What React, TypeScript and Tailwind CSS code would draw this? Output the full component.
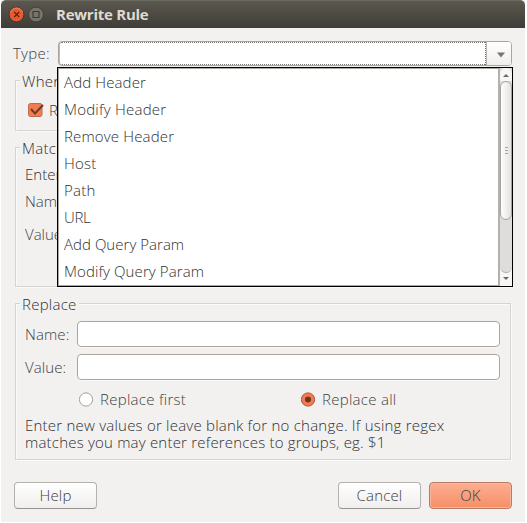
import React from 'react';

const OPTIONS: { label: string; tracking: string }[] = [
  { label: 'Add Header', tracking: 'tracking-[0.12px]' },
  { label: 'Modify Header', tracking: 'tracking-[0.23px]' },
  { label: 'Remove Header', tracking: 'tracking-[0.15px]' },
  { label: 'Host', tracking: 'tracking-[0.25px]' },
  { label: 'Path', tracking: 'tracking-[0.25px]' },
  { label: 'URL', tracking: 'tracking-[-0.3px]' },
  { label: 'Add Query Param', tracking: 'tracking-[0.03px]' },
  { label: 'Modify Query Param', tracking: 'tracking-[0.1px]' },
];

function TitleBar() {
  return (
    <header className="flex h-7 items-center rounded-t-[5px] border-t border-[#6b685f] bg-linear-to-b from-[#5b584f] to-[#3e3d38] pl-2">
      <svg width="36" height="17" viewBox="0 0 36 17" className="shrink-0">
        <circle cx="7.500" cy="8.500" r="7.400" fill="#e9592c" stroke="#3a2b24" strokeWidth=".8" />
        <path d="M1.400 6.500a6.400 6.400 0 0 1 12.200 0" fill="none" stroke="#f89471" strokeWidth=".8" />
        <path d="m5.200 6 5 5m0-5-5 5" stroke="#51251a" strokeWidth="1.200" />
        <circle cx="27" cy="8.500" r="7.400" fill="#77746a" stroke="#36352f" strokeWidth=".8" />
        <path d="M24 5.500h6v6h-6z" fill="none" stroke="#3b3a35" strokeWidth="1.100" />
      </svg>
      <h1 className="ml-[11px] text-[15px] leading-none font-bold tracking-[-0.25px] text-[#dfdbd2]">Rewrite Rule</h1>
    </header>
  );
}

function Group({ title, className, children }: { title: string; className: string; children?: React.ReactNode }) {
  return (
    <section
      className={`relative border border-[#d6d4d2] shadow-[inset_1px_1px_0_#fafafa,1px_1px_0_#fafafa] ${className}`}
    >
      <h2 className="absolute -top-[10px] left-[4px] bg-[#f2f1f0] px-[2px] leading-[20px] tracking-[0.25px] text-[#303030]">{title}</h2>
      {children}
    </section>
  );
}

function Field({ label }: { label: string }) {
  return (
    <label className="flex h-[26px] items-center">
      <span className="w-[52px] tracking-[0.1px]">{label}</span>
      <span className="h-[26px] w-[423px] rounded-[4px] border border-[#aaa59f] bg-white shadow-[0_1px_0_#fafafa]" />
    </label>
  );
}

function Radio({ label, checked }: { label: string; checked?: boolean }) {
  return (
    <label className="flex w-[222px] shrink-0 items-center gap-[6px]">
      <svg width="15" height="15" viewBox="0 0 15 15">
        <circle cx="7" cy="7.500" r="6.600" fill={checked ? '#f37b50' : '#fff'} stroke={checked ? '#aa5438' : '#a39f99'} />
        {checked && <circle cx="7" cy="7.500" r="3" fill="#6f3524" />}
      </svg>
      <span className="tracking-[0.28px]">{label}</span>
    </label>
  );
}

function ScrollBar() {
  return (
    <div className="flex w-[14px] shrink-0 flex-col border-l-2 border-[#b4b0ab] bg-[#dfdddb]">
      <div className="flex h-[13px] items-center justify-center rounded-t-[6px] bg-[#f7f6f5] pt-[2px]">
        <svg width="6" height="3" viewBox="0 0 6 3"><path d="M0 3 3 0 6 3z" fill="#6c6965" /></svg>
      </div>
      <div className="flex h-[139px] flex-col items-center justify-center gap-[2px] rounded-[6px] border border-[#a8a49f] bg-linear-to-r from-[#fefefe] to-[#e5e3e1]">
        <i className="h-px w-[3px] bg-[#a5a19c]" />
        <i className="h-px w-[3px] bg-[#a5a19c]" />
        <i className="h-px w-[3px] bg-[#a5a19c]" />
      </div>
      <div className="-mt-[6px] flex-1" />
      <div className="flex h-[19px] items-end overflow-hidden bg-[#f7f6f5]">
        <div className="flex h-full w-full flex-col items-center">
          <i className="h-[6px] w-full shrink-0 rounded-b-[6px] border-b border-[#b5b1ac] bg-[#dfdddb]" />
          <svg width="6" height="3" viewBox="0 0 6 3" className="mt-[4px]"><path d="M0 0 3 3 6 0z" fill="#6c6965" /></svg>
        </div>
      </div>
    </div>
  );
}

function Button({ label, primary }: { label: string; primary?: boolean }) {
  return (
    <button
      className={`flex h-[27px] w-[83px] items-center justify-center rounded-[4px] border tracking-[0.15px] ${
        primary
          ? 'border-[#b97b65] bg-linear-to-b from-[#fcae91] to-[#f68e66] shadow-[inset_0_0_0_1px_#fbb499]'
          : 'border-[#b5b1ac] border-b-[#96928d] bg-linear-to-b from-white to-[#f0efee]'
      }`}
    >
      {label}
    </button>
  );
}

export default function App() {
  return (
    <div className="h-[523px] w-[527px] overflow-hidden bg-white pl-px font-['Open_Sans','Noto_Sans',sans-serif] text-[15px] font-light text-[#3e3e3e]">
      <div className="flex h-[522px] w-[524px] flex-col bg-[#f2f1f0]">
        <TitleBar />
        <main className="flex flex-1 flex-col pl-[13px]">
          <div className="relative mt-[13px] flex h-[25px] items-center">
            <span className="-ml-px w-[45px] tracking-[0.25px]">Type:</span>
            <div className="flex h-[25px] w-[454px] rounded-[4px] border border-[#aaa59f] bg-white">
              <div className="flex-1 rounded-l-[3px] border border-dotted border-[#777]" />
              <div className="flex w-[25px] items-center justify-center rounded-r-[3px] border-l border-[#b5b1ac] bg-linear-to-b from-white to-[#efeeec]">
                <svg width="8" height="6" viewBox="0 0 8 6" className="mt-[2px] ml-[3px]"><path d="M0 .5h8L4 5.500z" fill="#77736e" /></svg>
              </div>
            </div>
            <div className="absolute top-[26px] left-[43px] z-10 flex h-[220px] w-[456px] border border-black bg-white">
              <ul className="flex-1 border-t border-b border-l border-[#aaa6a1] pl-[5px] text-[#303030]">
                {OPTIONS.map((o) => (
                  <li key={o.label} className={`h-[27px] leading-[27px] ${o.tracking}`}>{o.label}</li>
                ))}
              </ul>
              <ScrollBar />
            </div>
          </div>
          <Group title="When" className="mt-[14px] ml-px h-[51px] w-[496px]">
            <label className="mt-[19px] ml-[12px] flex h-[20px] items-center gap-[5px]">
              <svg width="16" height="16" viewBox="0 0 16 16">
                <rect x=".5" y="1.500" width="13.500" height="13" rx="2" fill="#f37b50" stroke="#bd694c" />
                <path d="m3 7 4 4.500 8-8.500" fill="none" stroke="#6b3b2b" strokeWidth="2" />
              </svg>
              <span className="w-[8px] overflow-hidden">R</span>
            </label>
          </Group>
          <Group title="Match" className="mt-[16px] ml-px h-[140px] w-[496px]">
            <div className="flex flex-col pt-[16px] pl-[9px] leading-[20px]">
              <span className="text-[#303030]">Enter</span>
              <span className="mt-[7px]">Name:</span>
              <span className="mt-[13px]">Value:</span>
            </div>
          </Group>
          <Group title="Replace" className="mt-[16px] ml-px h-[157px] w-[496px]">
            <div className="flex flex-col gap-[7px] pt-[17px] pl-[9px]">
              <Field label="Name:" />
              <Field label="Value:" />
            </div>
            <div className="mt-[9px] flex h-[20px] items-center pl-[63px]">
              <Radio label="Replace first" />
              <Radio label="Replace all" checked />
            </div>
            <p className="mt-[8px] pl-[9px] leading-[17px] whitespace-nowrap text-[#303030]">
              <span className="block tracking-[0.22px]">Enter new values or leave blank for no change. If using regex</span>
              <span className="block tracking-[0.2px]">matches you may enter references to groups, eg. $1</span>
            </p>
          </Group>
          <footer className="mt-[22px] flex w-[498px] gap-2">
            <Button label="Help" />
            <div className="flex-1" />
            <Button label="Cancel" />
            <Button label="OK" primary />
          </footer>
        </main>
      </div>
    </div>
  );
}
